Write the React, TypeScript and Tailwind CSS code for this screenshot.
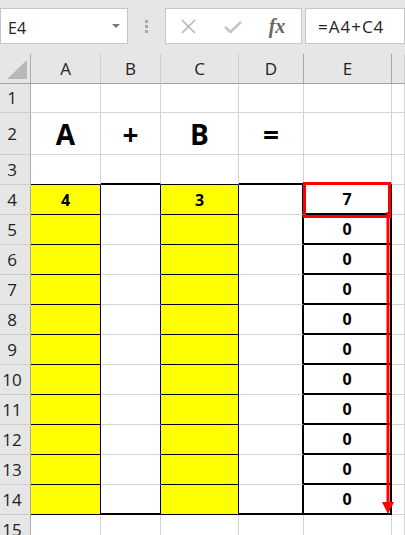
import React from "react";

const R_GRAY = "border-r border-r-[#d4d4d4]";
const R_BLACK = "border-r border-r-black";
const R_BLACK2 = "border-r-2 border-r-black";
const B_GRAY = "border-b border-b-[#d4d4d4]";
const B_BLACK = "border-b border-b-black";
const B_BLACK2 = "border-b-2 border-b-black";

const rowHeights: Record<number, string> = {
  1: "h-[29px]",
  2: "h-[42px]",
};

function cellBorders(r: number, c: number): string {
  const inBlock = r >= 4 && r <= 14;
  let right = R_GRAY;
  let bottom = B_GRAY;
  let bg = "bg-white";
  if (c === 1 || c === 3) {
    if (inBlock) {
      right = R_BLACK;
      bottom = B_BLACK;
      bg = "bg-[#ffff00]";
    }
    if (r === 3) bottom = B_BLACK;
  }
  if (c === 2) {
    if (inBlock) {
      right = R_BLACK;
      bottom = r === 14 ? B_BLACK2 : B_GRAY;
    }
    if (r === 3) bottom = B_BLACK2;
  }
  if (c === 4) {
    if (inBlock) {
      right = R_BLACK2;
      bottom = r === 14 ? B_BLACK2 : B_GRAY;
    }
    if (r === 3) bottom = B_BLACK2;
  }
  if (c === 5) {
    if (inBlock) {
      right = R_BLACK2;
      bottom = B_BLACK2;
    }
    if (r === 3) bottom = B_BLACK2;
  }
  return `${right} ${bottom} ${bg}`;
}

function cellText(r: number, c: number): { text: string; big: boolean } {
  if (r === 2) {
    const m: Record<number, string> = { 1: "A", 2: "+", 3: "B", 4: "=" };
    return { text: m[c] ?? "", big: true };
  }
  if (r === 4) {
    const m: Record<number, string> = { 1: "4", 3: "3", 5: "7" };
    return { text: m[c] ?? "", big: false };
  }
  if (r >= 5 && r <= 14 && c === 5) return { text: "0", big: false };
  return { text: "", big: false };
}

const cols = ["A", "B", "C", "D", "E", ""];

export default function App() {
  const rows = Array.from({ length: 15 }, (_, i) => i + 1);
  return (
    <div
      className="relative w-[405px] h-[535px] overflow-hidden bg-[#e6e6e6]"
      style={{ fontFamily: '"Open Sans", "Noto Sans", sans-serif' }}
    >
      {/* Toolbar */}
      <div className="flex h-[54px] items-start pt-[8px] bg-[#e6e6e6]">
        <div className="flex items-center justify-between w-[128px] h-[36px] border border-[#c6c6c6] bg-white pl-[7px] pr-[7px]">
          <span className="text-[16px] text-[#222] leading-none pt-[3px]">E4</span>
          <span className="w-0 h-0 border-l-[4px] border-r-[4px] border-t-[4px] border-l-transparent border-r-transparent border-t-[#7a7a7a]" />
        </div>
        <div className="flex flex-col items-center justify-center w-[37px] h-[36px] gap-[2px]">
          <span className="w-[3px] h-[3px] bg-[#a8a8a8]" />
          <span className="w-[3px] h-[3px] bg-[#a8a8a8]" />
          <span className="w-[3px] h-[3px] bg-[#a8a8a8]" />
        </div>
        <div className="flex items-center w-[137px] h-[36px] border border-[#c6c6c6] bg-white">
          <div className="flex items-center justify-center w-[44px] h-full">
            <svg width="15" height="15" viewBox="0 0 15 15">
              <path d="M1 1 L14 14 M14 1 L1 14" stroke="#b3b3b3" strokeWidth="1.5" fill="none" />
            </svg>
          </div>
          <div className="flex items-center justify-center w-[46px] h-full pt-[2px]">
            <svg width="18" height="12" viewBox="0 0 18 12">
              <path d="M1 6 L6.5 11 L17 1" stroke="#c4c4c4" strokeWidth="2.6" fill="none" />
            </svg>
          </div>
          <div className="flex items-center justify-center w-[42px] h-full">
            <span
              className="text-[20px] italic font-bold text-[#666] leading-none"
              style={{ fontFamily: '"Liberation Serif", "DejaVu Serif", serif' }}
            >
              fx
            </span>
          </div>
        </div>
        <div className="flex items-center flex-1 h-[36px] ml-[3px] border border-[#c6c6c6] bg-white pl-[12px]">
          <span className="text-[17px] text-[#222] leading-none tracking-[1px]">=A4+C4</span>
        </div>
      </div>

      {/* Grid */}
      <div className="grid grid-cols-[31px_70px_60px_78px_65px_88px_1fr]">
        <div className="relative h-[30px] bg-[#e6e6e6] border-r border-r-[#ababab] border-b border-b-[#a0a0a0]">
          <svg className="absolute left-0 top-0" width="31" height="30" viewBox="0 0 31 30">
            <polygon points="7,25 27,25 27,6" fill="#b8b8b8" />
          </svg>
        </div>
        {cols.map((l, i) => (
          <div
            key={"h" + i}
            className={`flex items-center justify-center h-[30px] bg-[#e6e6e6] border-b border-b-[#a0a0a0] ${
              i === 3 || i === 4 ? "border-r border-r-[#a8a8a8]" : "border-r border-r-[#cdcdcd]"
            } text-[17px] text-[#222]`}
          >
            {l}
          </div>
        ))}
        {rows.map((r) => {
          const h = rowHeights[r] ?? "h-[30px]";
          return (
            <React.Fragment key={r}>
              <div
                className={`${h} flex items-center justify-center pr-[6px] bg-[#e6e6e6] border-r border-r-[#ababab] border-b border-b-[#cdcdcd] text-[17px] text-[#222]`}
              >
                {r}
              </div>
              {[1, 2, 3, 4, 5, 6].map((c) => {
                const t = cellText(r, c);
                return (
                  <div
                    key={c}
                    className={`${h} flex items-center justify-center ${cellBorders(r, c)} font-bold text-black ${
                      t.big ? "text-[28px]" : "text-[16px]"
                    }`}
                  >
                    {t.text}
                  </div>
                );
              })}
            </React.Fragment>
          );
        })}
      </div>

      {/* Selection overlay */}
      <svg
        className="absolute left-0 top-0 pointer-events-none"
        width="405"
        height="535"
        viewBox="0 0 405 535"
      >
        <rect x="304.5" y="183.5" width="85" height="33" fill="none" stroke="#ff0000" strokeWidth="3" />
        <line x1="388" y1="212" x2="388" y2="504" stroke="#ff0000" strokeWidth="3" />
        <polygon points="382,502 394,502 388,514" fill="#ff0000" />
      </svg>
    </div>
  );
}
